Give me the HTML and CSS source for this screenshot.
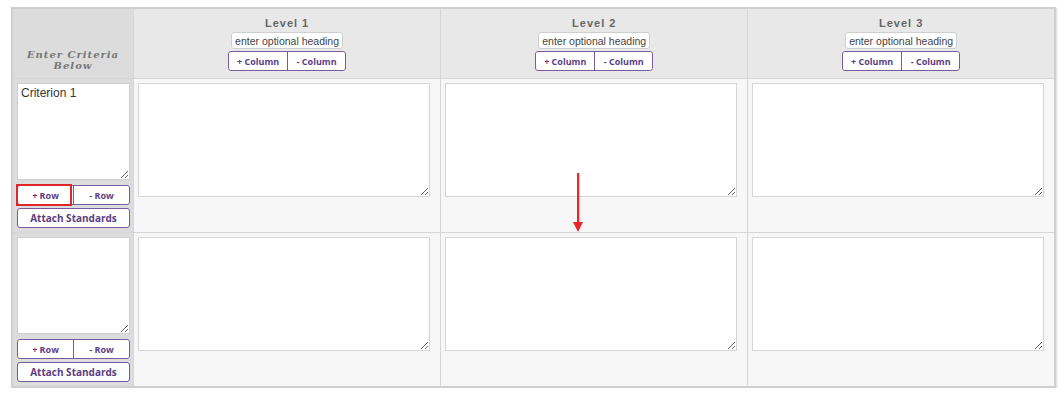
FILE: index.html
```html
<!DOCTYPE html>
<html lang="en">
<head>
    <meta charset="UTF-8">
    <title>Rubric Builder</title>
    <link rel="stylesheet" href="styles.css">
</head>
<body>
    <div class="rubric-wrap">
        <table class="rubric">
            <thead>
                <tr>
                    <th class="criteria-head">Enter Criteria<br>Below</th>
                    <th class="level-head">
                        <div class="level-title">Level 1</div>
                        <input type="text" class="heading-input" placeholder="enter optional heading">
                        <div class="btn-group">
                            <button class="btn">+ Column</button><button class="btn">- Column</button>
                        </div>
                    </th>
                    <th class="level-head">
                        <div class="level-title">Level 2</div>
                        <input type="text" class="heading-input" placeholder="enter optional heading">
                        <div class="btn-group">
                            <button class="btn">+ Column</button><button class="btn">- Column</button>
                        </div>
                    </th>
                    <th class="level-head">
                        <div class="level-title">Level 3</div>
                        <input type="text" class="heading-input" placeholder="enter optional heading">
                        <div class="btn-group">
                            <button class="btn">+ Column</button><button class="btn">- Column</button>
                        </div>
                    </th>
                </tr>
            </thead>
            <tbody>
                <tr class="row-first">
                    <td class="criteria-cell">
                        <textarea class="criteria-text">Criterion 1</textarea>
                        <div class="btn-group row-btns">
                            <button class="btn">+ Row</button><button class="btn">- Row</button>
                            <span class="marked"></span>
                        </div>
                        <button class="btn attach">Attach Standards</button>
                    </td>
                    <td class="level-cell"><textarea class="level-text"></textarea></td>
                    <td class="level-cell arrow-cell"><textarea class="level-text"></textarea><span class="arrow"></span></td>
                    <td class="level-cell"><textarea class="level-text"></textarea></td>
                </tr>
                <tr>
                    <td class="criteria-cell">
                        <textarea class="criteria-text"></textarea>
                        <div class="btn-group row-btns">
                            <button class="btn">+ Row</button><button class="btn">- Row</button>
                        </div>
                        <button class="btn attach">Attach Standards</button>
                    </td>
                    <td class="level-cell"><textarea class="level-text"></textarea></td>
                    <td class="level-cell"><textarea class="level-text"></textarea></td>
                    <td class="level-cell"><textarea class="level-text"></textarea></td>
                </tr>
            </tbody>
        </table>
    </div>
</body>
</html>
```

FILE: styles.css
```css
body {
    margin: 0;
    background-color: white;
    font-family: 'Liberation Sans', Arial, sans-serif;
}
.rubric-wrap {
    padding: 7px 8px 0 11px;
}
.rubric {
    width: 1045px;
    border-collapse: collapse;
    border: 2px solid #cfcfcf;
    box-shadow: 1px 1px 2px rgba(0, 0, 0, 0.15);
    table-layout: fixed;
}
.rubric th,
.rubric td {
    border: 1px solid #d6d6d6;
    padding: 0;
    vertical-align: top;
}
.criteria-head {
    width: 120px;
    background-color: #dcdcdc;
    vertical-align: bottom !important;
    padding-bottom: 7px !important;
    font-family: 'DejaVu Serif', 'Liberation Serif', serif;
    font-style: italic;
    font-weight: bold;
    font-size: 10px;
    line-height: 11px;
    letter-spacing: 1px;
    color: #777;
}
.level-head {
    background-color: #e8e8e8;
    height: 69px;
    text-align: center;
}
.level-title {
    margin-top: 8px;
    font-size: 11px;
    font-weight: bold;
    letter-spacing: 1px;
    color: #666;
    line-height: 13px;
}
.heading-input {
    display: block;
    margin: 2px auto 0;
    width: 112px;
    height: 17px;
    box-sizing: border-box;
    border: 1px solid #cfcfcf;
    border-radius: 3px;
    padding: 0 2px;
    font-family: 'Liberation Sans', Arial, sans-serif;
    font-size: 10.5px;
    text-align: center;
    color: #444;
    background: white;
}
.heading-input::placeholder {
    color: #444;
}
.btn-group {
    display: inline-flex;
    margin-top: 2px;
    border: 1px solid #7a5a9e;
    border-radius: 3px;
    background: white;
}
.btn {
    background: white;
    border: none;
    color: #5b3d82;
    font-family: 'Open Sans', sans-serif;
    font-weight: bold;
    font-size: 9px;
    padding: 0;
    height: 18px;
    cursor: pointer;
    border-radius: 3px;
}
.level-head .btn {
    width: 58px;
}
.btn-group .btn + .btn {
    border-left: 1px solid #7a5a9e;
    border-radius: 0 3px 3px 0;
}
.criteria-cell {
    background-color: #dcdcdc;
    padding: 4px 3px 4px 4px !important;
}
.criteria-text {
    display: block;
    width: 113px;
    height: 97px;
    box-sizing: border-box;
    border: 1px solid #d0d0d0;
    padding: 2px 3px;
    font-family: 'Liberation Sans', Arial, sans-serif;
    font-size: 12px;
    color: #333;
    resize: vertical;
}
.row-btns {
    display: flex;
    position: relative;
    width: 113px;
    box-sizing: border-box;
    margin-top: 5px;
}
.row-btns .btn {
    flex: 1;
}
.marked {
    position: absolute;
    left: -2px;
    top: -2px;
    width: 56px;
    height: 22px;
    box-sizing: border-box;
    border: 2px solid #e0252b;
}
.attach {
    display: block;
    width: 113px;
    height: 20px;
    margin-top: 3px;
    border: 1px solid #7a5a9e;
    border-radius: 3px;
    font-size: 10px;
}
.level-cell {
    background-color: #f7f7f7;
    padding: 4px 4px 0 4px !important;
}
.level-text {
    display: block;
    width: 292px;
    height: 114px;
    box-sizing: border-box;
    border: 1px solid #d6d6d6;
    background: white;
    resize: vertical;
}
.arrow-cell {
    position: relative;
}
.arrow {
    position: absolute;
    left: 136px;
    top: 94px;
    width: 2px;
    height: 50px;
    background: #e8262b;
    box-shadow: 1px 1px 2px rgba(0, 0, 0, 0.2);
}
.arrow::after {
    content: "";
    position: absolute;
    left: -4px;
    bottom: -9px;
    border-left: 5px solid transparent;
    border-right: 5px solid transparent;
    border-top: 10px solid #e8262b;
}
```
